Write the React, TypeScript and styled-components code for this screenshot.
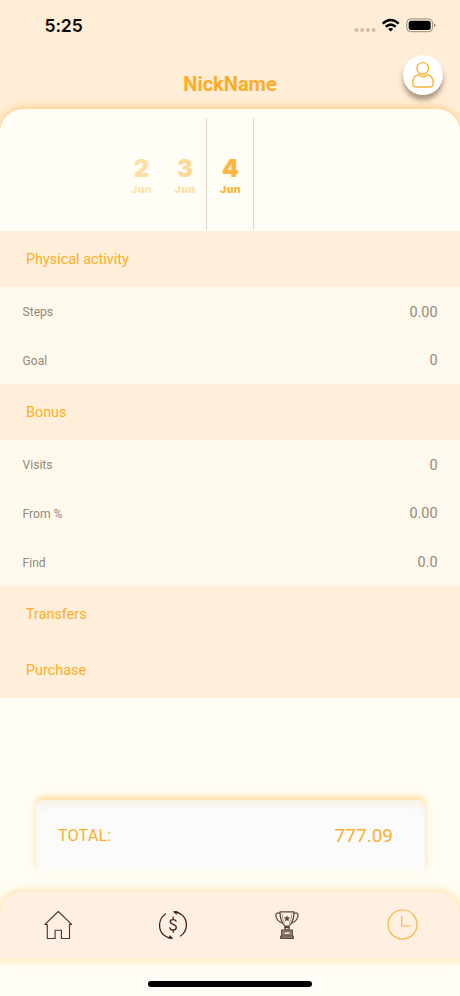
import React from 'react';
import styled, { createGlobalStyle } from 'styled-components';

const ORANGE = '#fbb026';

const GlobalStyle = createGlobalStyle`
  * { box-sizing: border-box; }
  body { margin: 0; background: #fffdf5; font-family: Roboto, sans-serif; }
`;

const Screen = styled.div`
  width: 460px;
  height: 996px;
  display: flex;
  flex-direction: column;
  overflow: hidden;
  background: #ffedd7;
`;

const Header = styled.header`
  height: 109px;
  flex: none;
`;

const StatusBar = styled.div`
  height: 52px;
  padding: 0 24px 0 44.5px;
  display: flex;
  align-items: center;
  justify-content: space-between;
`;

const Clock = styled.span`
  font: 600 17.6px/22px Inter, sans-serif;
  letter-spacing: -0.15px;
  color: #0c0906;
`;

const StatusIcons = styled.svg`
  display: block;
  width: 84px;
  height: 18px;
`;

const TitleBar = styled.div`
  height: 57px;
  padding: 3px 17px 0;
  display: grid;
  grid-template-columns: 40px 1fr 40px;
`;

const Title = styled.h1`
  grid-column: 2;
  margin: 0;
  padding-top: 17px;
  text-align: center;
  font-size: 20px;
  line-height: 24px;
  font-weight: 700;
  color: #fbae25;
`;

const Avatar = styled.button`
  width: 40px;
  height: 40px;
  padding: 0;
  border: 0;
  border-radius: 50%;
  background: #fff;
  display: flex;
  align-items: center;
  justify-content: center;
  box-shadow: 0 5px 5px rgba(80, 60, 35, 0.48);
`;

const Sheet = styled.main`
  flex: 1;
  min-height: 0;
  display: flex;
  flex-direction: column;
  border-radius: 23px 23px 0 0;
  background: #fffdf5;
  box-shadow: 0 -2px 7px rgba(255, 190, 90, 0.65);
`;

const DateStrip = styled.div`
  height: 122px;
  flex: none;
  padding: 9px 0 1px 119px;
  display: flex;
`;

const Day = styled.div<{ $width: number; $selected?: boolean }>`
  width: ${(p) => p.$width}px;
  padding: 37px 0 0 1px;
  text-align: center;
  color: #fdb63b;
  border: solid #d9d5cf;
  border-width: ${(p) => (p.$selected ? '0 1px' : '0')};
  font-family: Inter, sans-serif;
  font-weight: 900;
`;

const DayNumber = styled.div<{ $opacity: number }>`
  font-size: 24px;
  line-height: 27px;
  opacity: ${(p) => p.$opacity};
`;

const Month = styled.div<{ $opacity: number }>`
  padding-top: 1px;
  font-size: 9.3px;
  line-height: 14px;
  letter-spacing: 0.25px;
  transform: scaleX(1.13);
  opacity: ${(p) => p.$opacity};
`;

const SectionHeader = styled.h2`
  height: 56px;
  flex: none;
  margin: 0;
  padding: 1px 26px 0;
  display: flex;
  align-items: center;
  background: #ffeeda;
  color: ${ORANGE};
  font-size: 14.4px;
  font-weight: 400;
`;

const Rows = styled.div<{ $height: number }>`
  height: ${(p) => p.$height}px;
  flex: none;
  display: grid;
  grid-auto-rows: 1fr;
  background: #fff8ec;
`;

const Row = styled.div`
  padding: 2px 22.5px 0;
  display: flex;
  align-items: center;
  justify-content: space-between;
  color: #918a7e;
`;

const RowLabel = styled.span`
  font-size: 12.1px;
`;

const RowValue = styled.span`
  font-size: 14.4px;
`;

const TotalCard = styled.div`
  flex: none;
  height: 71px;
  margin: 102px 35px 0 36px;
  padding: 0 32px 0 22px;
  display: flex;
  align-items: center;
  justify-content: space-between;
  border-radius: 8px 8px 3px 3px;
  background: #fbfbfb;
  color: #f9af31;
  box-shadow:
    inset 0 8px 10px -4px #f8efe4,
    inset 0 0 7px #fffaf1,
    0 -4px 4px #ffe3b4,
    0 -3px 12px rgba(255, 222, 150, 0.4);
`;

const TotalLabel = styled.span`
  font-size: 16.4px;
`;

const TotalValue = styled.span`
  font-size: 19px;
`;

const TabBar = styled.nav`
  flex: none;
  height: 67px;
  margin-top: 21px;
  padding: 0 1px;
  display: grid;
  grid-template-columns: repeat(4, 1fr);
  place-items: center;
  border-radius: 23px 23px 0 0;
  background: #fff0e2;
  box-shadow: 0 0 4px 3px #ffebc5, 0 -1px 12px 2px rgba(255, 228, 160, 0.35);
`;

const Tab = styled.button`
  border: 0;
  padding: 0 0 1px;
  background: none;
  display: flex;
`;

const HomeIndicator = styled.div`
  flex: none;
  width: 164px;
  height: 6px;
  margin: 22px auto 0;
  border-radius: 3px;
  background: #000;
`;

const dates = [
  { day: 2, width: 44, opacity: 0.43, monthOpacity: 0.35 },
  { day: 3, width: 43, opacity: 0.5, monthOpacity: 0.42 },
  { day: 4, width: 48, opacity: 1, monthOpacity: 1 },
];

const sections = [
  { title: 'Physical activity', height: 97, rows: [['Steps', '0.00'], ['Goal', '0']] },
  { title: 'Bonus', height: 146, rows: [['Visits', '0'], ['From %', '0.00'], ['Find', '0.0']] },
  { title: 'Transfers', height: 0, rows: [] },
  { title: 'Purchase', height: 0, rows: [] },
];

const UserIcon = () => (
  <svg width="24" height="28" viewBox="0 0 24 28" fill="none" stroke="#f9b436" strokeWidth="1.4">
    <circle cx="11.8" cy="7.4" r="5.8" />
    <path d="M7.2 13.8C3.4 14.5 1.6 18.3 1.6 22.6Q1.6 26 4.8 26H19Q22.2 26 22.2 22.6C22.2 18.3 20.4 14.5 16.6 13.8Q11.9 17.8 7.2 13.8Z" />
  </svg>
);

const HomeIcon = () => (
  <svg width="30" height="30" viewBox="0 0 30 30" fill="none" stroke="#4a3b2d" strokeWidth="1.15" strokeLinejoin="round">
    <path d="M15.3 1.5 28.7 14.3H26.5V28.5H18.4V20.2H12.1V28.5H4.3V14.3H1.9Z" />
  </svg>
);

const MoneyIcon = () => (
  <svg width="30" height="30" viewBox="0 0 30 30" fill="none" stroke="#35291e" strokeWidth="1.3" strokeLinecap="round">
    <path d="M7.5 4C-.1 9.2-.4 20.5 6.4 25.5Q9.5 27.8 13.5 28.1" />
    <path d="M22.5 26C30.1 20.8 30.3 9.5 23.4 4.5Q20.5 2.3 17 2" />
    <path d="m12 25.9 2.6 2.2-3.2.4ZM18.2 4 15.6 1.8 18.8 1.5Z" fill="#35291e" strokeWidth=".8" />
    <path d="M18.1 11.3C17.2 8.8 12 9 12.2 11.9C12.4 15.1 18.3 13.8 18.3 17.5C18.3 20.7 12.4 20.8 11.9 17.9M15.2 7.2V9.4M15.2 20.2V22.2" />
  </svg>
);

const TrophyIcon = () => (
  <svg width="24" height="30" viewBox="0 0 24 30" fill="none" stroke="#544539" strokeWidth="1.2" strokeLinejoin="round">
    <path d="M5 1.8H19C19 8.5 17.8 13.1 13.7 16.4H10.3C6.2 13.1 5 8.5 5 1.8Z" />
    <path d="M5 3.2H1.8Q.2 4.2 1.5 7.6Q2.8 11.4 7.2 13M19 3.2H22.2Q23.8 4.2 22.5 7.6Q21.2 11.4 16.8 13" />
    <path d="M7.1 3.5Q7.2 9.5 9.6 13.5M16.9 3.5Q16.8 9.5 14.4 13.5" strokeWidth=".5" />
    <path d="m12 5.9.8 1.7 1.9.2-1.4 1.2.4 1.9-1.7-1-1.7 1 .4-1.9-1.4-1.2 1.9-.2Z" fill="#544539" strokeWidth=".4" />
    <path d="M10.3 16.4H13.7L14.2 20H9.8ZM9.1 17.6H14.9" />
    <path d="M6.7 20H17.3V26H6.7ZM5.7 26H18.3V28.3H5.7Z" fill="#a19281" />
    <path d="M9 21.7H15V24.6H9Z" fill="#eadccd" strokeWidth=".7" />
  </svg>
);

const TimeIcon = () => (
  <svg width="32" height="32" viewBox="0 0 32 32" fill="none" stroke="#f8b749" strokeWidth="1.2">
    <circle cx="16.5" cy="15.5" r="14.5" />
    <path d="M15.7 7V17H24.5" />
  </svg>
);

export default function App() {
  return (
    <>
      <GlobalStyle />
      <Screen>
        <Header>
          <StatusBar>
            <Clock>5:25</Clock>
            <StatusIcons viewBox="0 0 84 18">
              <g fill="#d2bda1">
                <circle cx="4.5" cy="13" r="2" /><circle cx="10.2" cy="13" r="2" />
                <circle cx="15.9" cy="13" r="2" /><circle cx="21.6" cy="13" r="2" />
              </g>
              <g fill="none" stroke="#000" strokeWidth="2.5">
                <path d="M30.7 6.7Q38.7-.6 46.7 6.7" />
                <path d="M33.7 9.8Q38.7 5.4 43.7 9.8" />
              </g>
              <path d="M36.1 12Q38.7 9.9 41.3 12L38.7 14.6Z" />
              <rect x="54.8" y="1.9" width="25.8" height="12.8" rx="4" fill="none" stroke="#9b8c78" />
              <rect x="56.7" y="3.7" width="22" height="9.2" rx="2.5" />
              <path d="M82 6.2Q83.5 6.7 83.5 8.2Q83.5 9.8 82 10.3Z" fill="#9b8c78" />
            </StatusIcons>
          </StatusBar>
          <TitleBar>
            <Title>NickName</Title>
            <Avatar aria-label="Profile"><UserIcon /></Avatar>
          </TitleBar>
        </Header>
        <Sheet>
          <DateStrip>
            {dates.map((d) => (
              <Day key={d.day} $width={d.width} $selected={d.day === 4}>
                <DayNumber $opacity={d.opacity}>{d.day}</DayNumber>
                <Month $opacity={d.monthOpacity}>Jun</Month>
              </Day>
            ))}
          </DateStrip>
          {sections.map((s) => (
            <React.Fragment key={s.title}>
              <SectionHeader>{s.title}</SectionHeader>
              {s.rows.length > 0 && (
                <Rows $height={s.height}>
                  {s.rows.map(([label, value]) => (
                    <Row key={label}>
                      <RowLabel>{label}</RowLabel>
                      <RowValue>{value}</RowValue>
                    </Row>
                  ))}
                </Rows>
              )}
            </React.Fragment>
          ))}
          <TotalCard>
            <TotalLabel>TOTAL:</TotalLabel>
            <TotalValue>777.09</TotalValue>
          </TotalCard>
          <TabBar>
            <Tab aria-label="Home"><HomeIcon /></Tab>
            <Tab aria-label="Money"><MoneyIcon /></Tab>
            <Tab aria-label="Awards"><TrophyIcon /></Tab>
            <Tab aria-label="History"><TimeIcon /></Tab>
          </TabBar>
          <HomeIndicator />
        </Sheet>
      </Screen>
    </>
  );
}
